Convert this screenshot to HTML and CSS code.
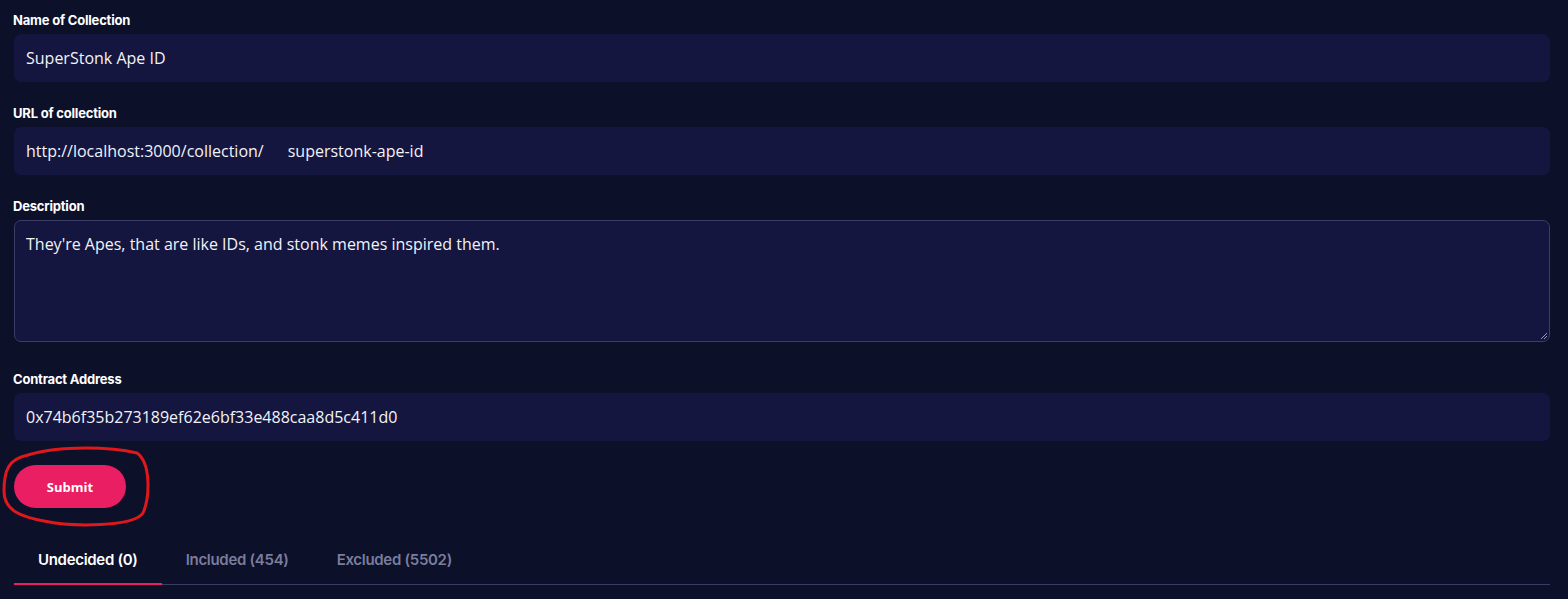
FILE: index.html
```html
<!DOCTYPE html>
<html>
<head>
<meta charset="utf-8">
<link rel="stylesheet" href="styles.css">
</head>
<body>
<main class="page">
  <form class="form">
    <div class="field">
      <label class="label">Name of Collection</label>
      <div class="input">SuperStonk Ape ID</div>
    </div>
    <div class="field">
      <label class="label">URL of collection</label>
      <div class="input url"><span class="prefix">http://localhost:3000/collection/</span><span class="slug">superstonk-ape-id</span></div>
    </div>
    <div class="field field-desc">
      <label class="label">Description</label>
      <div class="textarea">They're Apes, that are like IDs, and stonk memes inspired them.
        <svg class="grip" width="10" height="10" viewBox="0 0 10 10"><path d="M9 3 L3 9 M9 6 L6 9" stroke="#9a9cb8" stroke-width="1"/></svg>
      </div>
    </div>
    <div class="field">
      <label class="label">Contract Address</label>
      <div class="input">0x74b6f35b273189ef62e6bf33e488caa8d5c411d0</div>
    </div>
    <div class="actions">
      <button type="button" class="submit">Submit</button>
      <svg class="scribble" width="160" height="90" viewBox="0 0 160 90">
        <path d="M28 10 C 60 0, 112 2, 137 8 C 151 18, 150 52, 143 68 C 134 82, 72 82, 44 76 C 22 72, 4 66, 4 46 C 4 26, 8 14, 28 10 Z" fill="none" stroke="#e0181c" stroke-width="3" stroke-linejoin="round"/>
      </svg>
    </div>
  </form>
  <nav class="tabs">
    <div class="tab active">Undecided (0)</div>
    <div class="tab">Included (454)</div>
    <div class="tab">Excluded (5502)</div>
  </nav>
</main>
</body>
</html>
```

FILE: styles.css
```css
html, body {
  margin: 0;
  padding: 0;
  background: #0c1029;
  height: 100%;
}
.page {
  padding: 12px 18px 0 14px;
  font-family: "Open Sans", sans-serif;
  color: #fff;
}
.form {
  display: flex;
  flex-direction: column;
}
.field {
  display: flex;
  flex-direction: column;
  margin-bottom: 23px;
}
.field-desc {
  margin-bottom: 29px;
}
.label {
  font-family: Inter, sans-serif;
  font-weight: 700;
  font-size: 13px;
  line-height: 16px;
  letter-spacing: -0.2px;
  margin-bottom: 6px;
  margin-left: -1px;
  color: #fff;
}
.input {
  height: 48px;
  box-sizing: border-box;
  background: #14163f;
  border-radius: 7px;
  padding: 0 12px;
  display: flex;
  align-items: center;
  font-size: 16px;
  color: #f2f2f7;
}
.url .prefix {
  margin-right: 24px;
}
.textarea {
  position: relative;
  height: 122px;
  box-sizing: border-box;
  background: #14163f;
  border: 1px solid #3a3d66;
  border-radius: 7px;
  padding: 11px 11px;
  font-size: 16px;
  line-height: 24px;
  color: #f2f2f7;
}
.grip {
  position: absolute;
  right: 1px;
  bottom: 1px;
}
.actions {
  position: relative;
  display: flex;
  margin-top: 1px;
}
.submit {
  width: 112px;
  height: 43px;
  border: none;
  border-radius: 22px;
  background: #e91e63;
  color: #fff;
  font-family: "Open Sans", sans-serif;
  font-weight: 700;
  font-size: 13px;
  cursor: pointer;
}
.scribble {
  position: absolute;
  left: -14px;
  top: -20px;
  pointer-events: none;
}
.tabs {
  display: flex;
  margin-top: 33px;
  border-bottom: 1px solid #3a3d66;
}
.tab {
  font-family: Inter, sans-serif;
  font-weight: 600;
  font-size: 15px;
  letter-spacing: -0.3px;
  color: #7b7d9c;
  padding: 9px 24px 14px;
  margin-bottom: -1px;
  border-bottom: 2px solid transparent;
}
.tab.active {
  color: #fff;
  border-bottom-color: #e91e63;
}
```
